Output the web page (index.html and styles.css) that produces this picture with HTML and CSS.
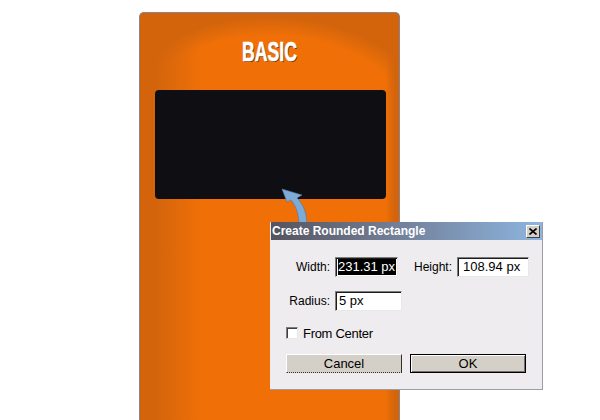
FILE: index.html
```html
<!DOCTYPE html>
<html>
<head>
<meta charset="utf-8">
<link rel="stylesheet" href="styles.css">
</head>
<body>
<div class="stage">
  <div class="card">
    <div class="card-title"><span>BASIC</span></div>
    <div class="screen"></div>
  </div>

  <svg class="pointer" width="40" height="44" viewBox="274 182 40 44">
    <path d="M282,189 L302,195 L297,198 C304,205 307,214 307,226 L299,226 C299,214 296,206 291,200 L287,202 Z" fill="#7eaad8" stroke="#55739a" stroke-width="0.6"/>
  </svg>

  <div class="dialog">
    <div class="titlebar">
      <span class="titletext">Create Rounded Rectangle</span>
      <span class="close">
        <svg width="8" height="7" viewBox="0 0 8 7"><path d="M0.5,0.5 L7.5,6.5 M7.5,0.5 L0.5,6.5" stroke="#000" stroke-width="1.6"/></svg>
      </span>
    </div>
    <div class="dlg-body">
      <div class="row row-size">
        <span class="lbl">Width:</span>
        <span class="field field-w"><span class="sel">231.31 px</span></span>
        <span class="lbl lbl-h">Height:</span>
        <span class="field field-h">108.94 px</span>
      </div>
      <div class="row row-radius">
        <span class="lbl">Radius:</span>
        <span class="field field-r">5 px</span>
      </div>
      <div class="row row-check">
        <span class="checkbox"></span>
        <span class="chk-label">From Center</span>
      </div>
      <div class="row row-buttons">
        <span class="btn">Cancel</span>
        <span class="btn btn-default">OK</span>
      </div>
    </div>
  </div>
</div>
</body>
</html>
```

FILE: styles.css
```css
body {
  margin: 0;
  background: #fff;
  font-family: "Liberation Sans", Arial, sans-serif;
}

.stage {
  position: relative;
  width: 600px;
  height: 420px;
  overflow: hidden;
}

.card {
  margin: 12px 0 0 139px;
  width: 261px;
  height: 420px;
  box-sizing: border-box;
  border: 1px solid #86848f;
  border-bottom: 0;
  border-radius: 5px 5px 0 0;
  background-color: #f07007;
  background-image:
    linear-gradient(to right, #d3640c 0, #d3640c 15px, rgba(211, 100, 12, 0) 62px),
    linear-gradient(to left, #d3640c 0, #d3640c 4px, rgba(211, 100, 12, 0) 14px),
    radial-gradient(ellipse 180px 136px at 50% 140px, rgba(211, 100, 12, 0) 86%, #d3640c 100%);
  background-size: auto, auto, 100% 140px;
  background-repeat: no-repeat;
}

.card-title {
  height: 77px;
  display: flex;
  align-items: center;
  justify-content: center;
}

.card-title span {
  display: inline-block;
  font-weight: 700;
  font-size: 28px;
  line-height: 1;
  color: #fff;
  transform: scaleX(0.63);
  -webkit-text-stroke: 0.6px #fff;
  text-shadow: 1px 1px 0 #5a3210;
}

.screen {
  margin-left: 15px;
  width: 231px;
  height: 109px;
  background: #0f0e13;
  border-radius: 4px;
}

.pointer {
  position: absolute;
  left: 274px;
  top: 182px;
}

.dialog {
  position: absolute;
  left: 270px;
  top: 222px;
  width: 273px;
  height: 168px;
  box-sizing: border-box;
  background: #eeecef;
  border-right: 1px solid #9c9ca4;
  border-bottom: 1px solid #9c9ca4;
}

.titlebar {
  height: 18px;
  margin-left: 1px;
  padding: 0 2px 0 1px;
  background: linear-gradient(to right, #55545f 0%, #6f7990 40%, #8db5df 100%);
  display: flex;
  align-items: center;
  justify-content: space-between;
}

.titletext {
  color: #fff;
  font-weight: 700;
  font-size: 12px;
  line-height: 14px;
}

.close {
  width: 14px;
  height: 13px;
  box-sizing: border-box;
  background: #d4d0c8;
  border: 1px solid;
  border-color: #fff #404040 #404040 #fff;
  display: flex;
  align-items: center;
  justify-content: center;
}

.close svg {
  display: block;
}

.dlg-body {
  padding: 17px 0 0 16px;
  font-size: 12px;
  color: #000;
}

.row {
  display: flex;
  align-items: center;
}

.row-size {
  height: 20px;
}

.lbl {
  width: 44px;
  text-align: right;
  margin-right: 5px;
}

.lbl-h {
  width: auto;
  margin-left: 16px;
  margin-right: 5px;
}

.field {
  height: 20px;
  box-sizing: border-box;
  background: #fff;
  border: 1px solid;
  border-color: #7d7d7d #e8e8e8 #e8e8e8 #7d7d7d;
  box-shadow: inset 1px 1px 0 #1c1c1c;
  font-size: 13px;
  line-height: 16px;
  padding: 1px 0 0 3px;
  white-space: nowrap;
  overflow: hidden;
}

.field-w {
  width: 63px;
  padding-left: 2px;
}

.field-h {
  width: 72px;
  padding-left: 5px;
}

.field-r {
  width: 67px;
}

.sel {
  display: inline-block;
  background: #000;
  color: #fff;
  line-height: 16px;
  padding-right: 1px;
}

.row-radius {
  margin-top: 14px;
  height: 20px;
}

.row-check {
  margin-top: 16px;
  height: 12px;
}

.checkbox {
  width: 12px;
  height: 12px;
  box-sizing: border-box;
  background: #fff;
  border: 1px solid;
  border-color: #7d7d7d #e8e8e8 #e8e8e8 #7d7d7d;
  box-shadow: inset 1px 1px 0 #404040;
}

.chk-label {
  margin-left: 5px;
  font-size: 13px;
  letter-spacing: -0.3px;
}

.row-buttons {
  margin-top: 15px;
  gap: 8px;
}

.btn {
  width: 116px;
  height: 19px;
  box-sizing: border-box;
  background: #d4d0c8;
  border: 1px solid;
  border-color: #fff #303030 #303030 #fff;
  border-bottom-style: dotted;
  display: flex;
  align-items: center;
  justify-content: center;
  font-size: 13px;
}

.btn-default {
  border: 1px solid #000;
  box-shadow: inset 1px 1px 0 #fff, inset -1px -1px 0 #707070;
}
```
